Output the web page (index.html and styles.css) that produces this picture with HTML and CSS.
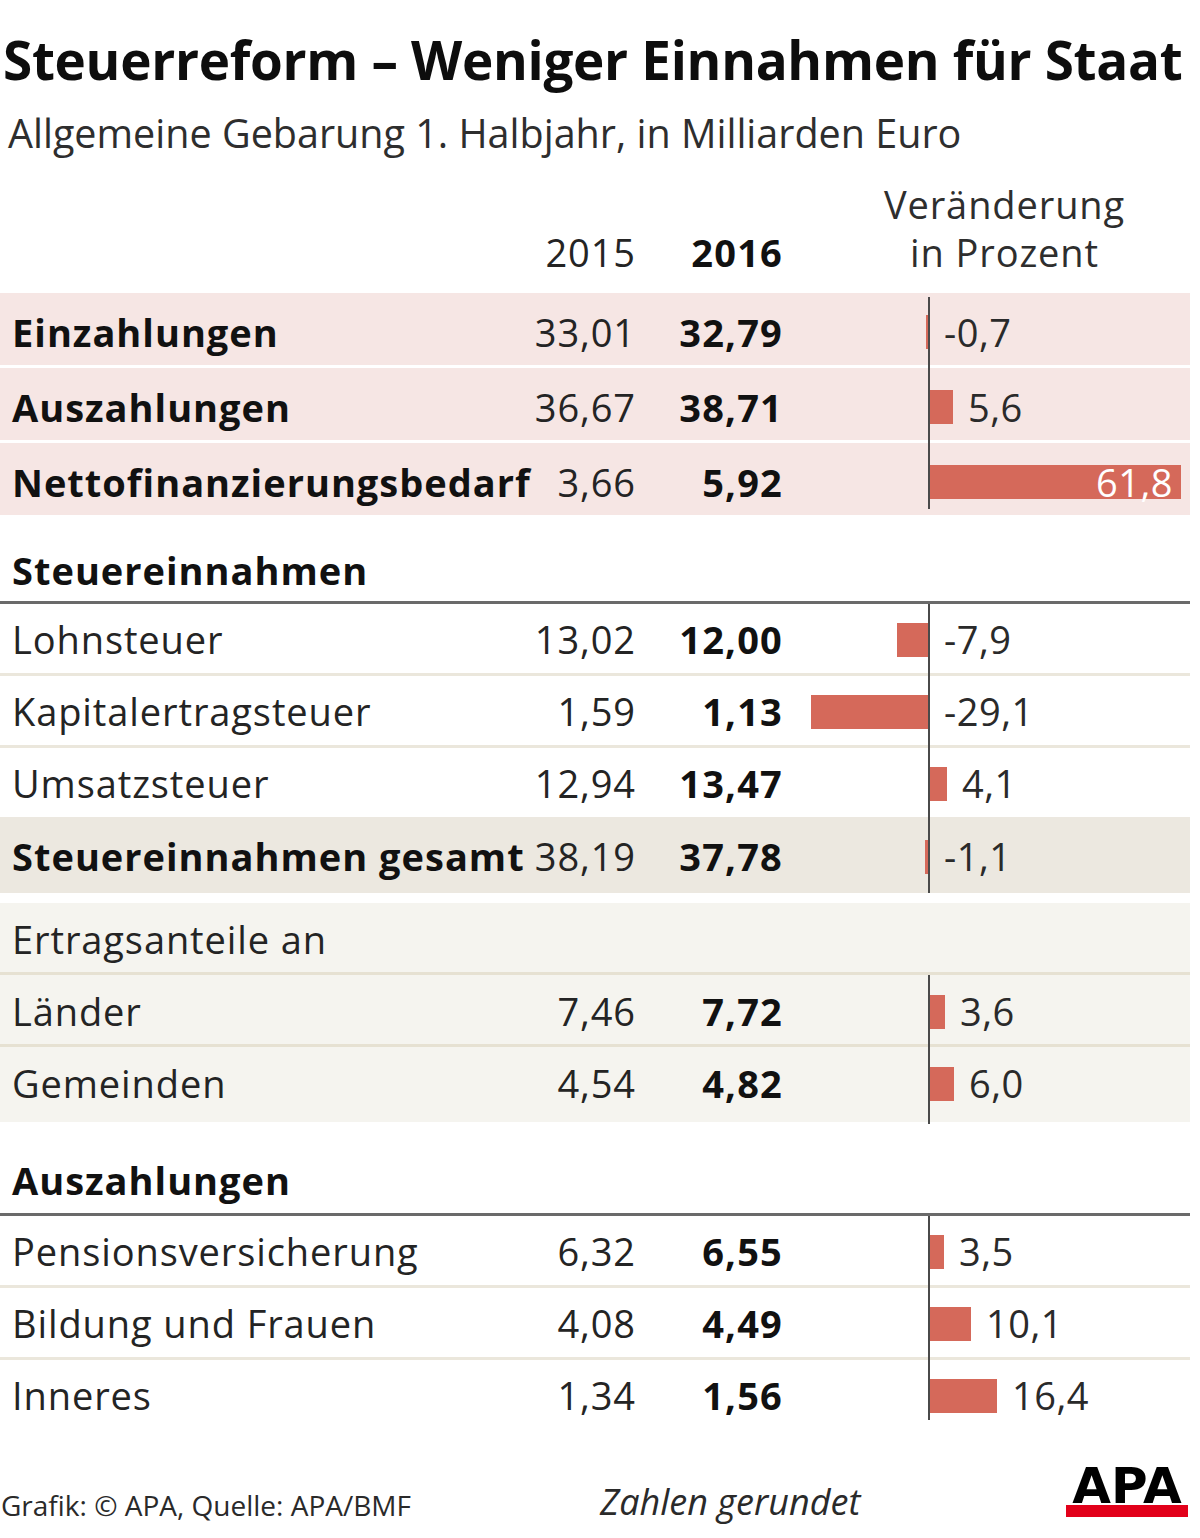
FILE: index.html
```html
<!DOCTYPE html>
<html lang="de">
<head>
<meta charset="utf-8">
<title>Steuerreform – Weniger Einnahmen für Staat</title>
<link rel="stylesheet" href="styles.css">
</head>
<body>
<div class="page">
  <h1 class="title">Steuerreform – Weniger Einnahmen für Staat</h1>
  <p class="subtitle">Allgemeine Gebarung 1. Halbjahr, in Milliarden Euro</p>

  <div class="grid head">
    <div class="name"></div>
    <div class="v15">2015</div>
    <div class="v16">2016</div>
    <div class="chg">Veränderung<br>in Prozent</div>
  </div>

  <div class="group pink axis-pink">
    <div class="grid row">
      <div class="name b">Einzahlungen</div>
      <div class="v15">33,01</div>
      <div class="v16">32,79</div>
      <div class="neg"><span class="bar" style="width:3px"></span></div>
      <div class="pos"><span class="lbl">-0,7</span></div>
    </div>
    <div class="grid row">
      <div class="name b">Auszahlungen</div>
      <div class="v15">36,67</div>
      <div class="v16">38,71</div>
      <div class="neg"></div>
      <div class="pos"><span class="bar" style="width:23px"></span><span class="lbl">5,6</span></div>
    </div>
    <div class="grid row">
      <div class="name b">Nettofinanzierungsbedarf</div>
      <div class="v15">3,66</div>
      <div class="v16">5,92</div>
      <div class="neg"></div>
      <div class="pos"><span class="bar inbar" style="width:251px"><span class="lbl-in">61,8</span></span></div>
    </div>
  </div>

  <h2 class="section">Steuereinnahmen</h2>
  <div class="group ruled axis-steuer">
    <div class="grid row">
      <div class="name">Lohnsteuer</div>
      <div class="v15">13,02</div>
      <div class="v16">12,00</div>
      <div class="neg"><span class="bar" style="width:32px"></span></div>
      <div class="pos"><span class="lbl">-7,9</span></div>
    </div>
    <div class="grid row">
      <div class="name">Kapitalertragsteuer</div>
      <div class="v15">1,59</div>
      <div class="v16">1,13</div>
      <div class="neg"><span class="bar" style="width:118px"></span></div>
      <div class="pos"><span class="lbl">-29,1</span></div>
    </div>
    <div class="grid row">
      <div class="name">Umsatzsteuer</div>
      <div class="v15">12,94</div>
      <div class="v16">13,47</div>
      <div class="neg"></div>
      <div class="pos"><span class="bar" style="width:17px"></span><span class="lbl">4,1</span></div>
    </div>
    <div class="grid row total">
      <div class="name b">Steuereinnahmen gesamt</div>
      <div class="v15">38,19</div>
      <div class="v16">37,78</div>
      <div class="neg"><span class="bar" style="width:4px"></span></div>
      <div class="pos"><span class="lbl">-1,1</span></div>
    </div>
  </div>

  <div class="group beige axis-ertrag">
    <div class="grid row">
      <div class="name">Ertragsanteile an</div>
    </div>
    <div class="grid row">
      <div class="name">Länder</div>
      <div class="v15">7,46</div>
      <div class="v16">7,72</div>
      <div class="neg"></div>
      <div class="pos"><span class="bar" style="width:15px"></span><span class="lbl">3,6</span></div>
    </div>
    <div class="grid row">
      <div class="name">Gemeinden</div>
      <div class="v15">4,54</div>
      <div class="v16">4,82</div>
      <div class="neg"></div>
      <div class="pos"><span class="bar" style="width:24px"></span><span class="lbl">6,0</span></div>
    </div>
  </div>

  <h2 class="section section-2">Auszahlungen</h2>
  <div class="group ruled axis-aus">
    <div class="grid row">
      <div class="name">Pensionsversicherung</div>
      <div class="v15">6,32</div>
      <div class="v16">6,55</div>
      <div class="neg"></div>
      <div class="pos"><span class="bar" style="width:14px"></span><span class="lbl">3,5</span></div>
    </div>
    <div class="grid row">
      <div class="name">Bildung und Frauen</div>
      <div class="v15">4,08</div>
      <div class="v16">4,49</div>
      <div class="neg"></div>
      <div class="pos"><span class="bar" style="width:41px"></span><span class="lbl">10,1</span></div>
    </div>
    <div class="grid row">
      <div class="name">Inneres</div>
      <div class="v15">1,34</div>
      <div class="v16">1,56</div>
      <div class="neg"></div>
      <div class="pos"><span class="bar" style="width:67px"></span><span class="lbl">16,4</span></div>
    </div>
  </div>

  <footer class="footer">
    <div class="credit">Grafik: © APA, Quelle: APA/BMF</div>
    <div class="note">Zahlen gerundet</div>
    <div class="logo"><span class="logo-text">APA</span><span class="logo-bar"></span></div>
  </footer>
</div>
</body>
</html>
```

FILE: styles.css
```css
* { box-sizing: border-box; margin: 0; padding: 0; }

body {
  width: 1200px;
  height: 1538px;
  background: #fff;
  font-family: "Open Sans", "Noto Sans", sans-serif;
  color: #242424;
  overflow: hidden;
}

.page { width: 1200px; }

.title {
  font-size: 53px;
  font-weight: 700;
  line-height: 60px;
  letter-spacing: -0.3px;
  margin-top: 30px;
  padding-left: 3px;
  color: #0d0d0d;
  white-space: nowrap;
}

.subtitle {
  font-size: 39.5px;
  line-height: 44px;
  margin-top: 21px;
  padding-left: 8px;
  color: #2e2e2e;
  white-space: nowrap;
}

.grid {
  display: grid;
  grid-template-columns: 530px 106px 147px 146px 261px;
  width: 1190px;
}

.head {
  margin-top: 25px;
  height: 96px;
  font-size: 38px;
  line-height: 48px;
  letter-spacing: 0.9px;
}
.head .v15, .head .v16 { align-self: end; }
.head .chg {
  grid-column: 4 / 6;
  text-align: center;
  padding-left: 36px;
  color: #2e2e2e;
}

.v15 { text-align: right; }
.v16 { text-align: right; font-weight: 700; color: #111; letter-spacing: 1.2px; }
.name { padding-left: 12px; white-space: nowrap; }
.b { font-weight: 700; color: #111; letter-spacing: 1px; }

.group { position: relative; width: 1190px; }
.group::after {
  content: "";
  position: absolute;
  left: 928px;
  width: 2px;
  background: #4a4a4a;
}

.row {
  box-sizing: content-box;
  font-size: 38px;
  letter-spacing: 0.9px;
}
.row > div { height: 100%; }

.neg, .pos { display: flex; align-items: center; }
.neg { justify-content: flex-end; }

.bar {
  display: block;
  height: 34px;
  background: #d5695a;
  flex: none;
}
.pos .bar { margin-left: 1px; }
.lbl { margin-left: 15px; color: #2a2a2a; letter-spacing: 0.5px; }
.inbar {
  display: flex;
  align-items: center;
  justify-content: flex-end;
  padding-right: 8px;
}
.lbl-in { color: #fff; letter-spacing: 0.5px; }

/* pink summary block */
.pink { margin-top: 17px; background: #f6e6e4; }
.pink .row { height: 66px; padding-top: 6px; line-height: 66px; }
.pink .row + .row { border-top: 3px solid #fff; }
.axis-pink::after { top: 4px; bottom: 6px; }

/* section headings */
.section {
  font-size: 38px;
  font-weight: 700;
  line-height: 48px;
  letter-spacing: 1px;
  padding-left: 12px;
  margin-top: 31px;
  margin-bottom: 7px;
  color: #111;
}
.section-2 { margin-top: 34px; margin-bottom: 9px; }

.ruled { border-top: 3px solid #6a6a6a; }
.ruled .row { height: 67px; padding-top: 2px; line-height: 67px; }
.ruled .row + .row { border-top: 3px solid #ebe7dc; }
.ruled .row.total {
  border-top: none;
  background: #ece8e0;
  height: 73px;
  padding-top: 3px;
  line-height: 73px;
}
.axis-steuer::after { top: 0; bottom: 0; }
.axis-aus::after { top: 0; bottom: 9px; }

.beige {
  margin-top: 10px;
  background: #f5f4ef;
  padding-bottom: 6px;
}
.beige .row { height: 65px; padding-top: 4px; line-height: 65px; }
.beige .row + .row { border-top: 3px solid #e6e1d2; }
.axis-ertrag::after { top: 72px; bottom: -2px; }

/* footer */
.footer {
  display: grid;
  grid-template-columns: 600px 1fr auto;
  align-items: end;
  height: 60px;
  margin-top: 31px;
  width: 1190px;
}
.credit {
  font-size: 28px;
  line-height: 30px;
  padding-left: 1px;
  color: #2a2a2a;
  white-space: nowrap;
}
.note {
  font-size: 36px;
  font-style: italic;
  line-height: 36px;
  color: #2a2a2a;
  white-space: nowrap;
}
.logo {
  display: flex;
  flex-direction: column;
  align-items: center;
  width: 122px;
  margin-bottom: 3px;
  margin-right: 2px;
}
.logo-text {
  font-family: "DejaVu Sans", "Liberation Sans", sans-serif;
  font-weight: 700;
  font-size: 50px;
  line-height: 38px;
  color: #000;
}
.logo-bar {
  display: block;
  width: 122px;
  height: 12px;
  background: #e2001a;
}
```
